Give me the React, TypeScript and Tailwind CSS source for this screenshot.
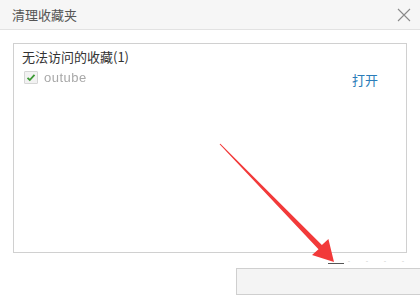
export default function App() {
  return (
    <div className="relative w-[420px] h-[307px] overflow-hidden bg-white font-['Microsoft_YaHei','Noto_Sans_CJK_SC',sans-serif] text-[12px]">
      {/* Title bar */}
      <div className="flex h-[30px] items-center justify-between border-b border-[#e2e2e2] bg-[#f6f6f6] pl-[12px] pr-[9px]">
        <span className="text-[13px] text-[#555]">清理收藏夹</span>
        <CloseIcon />
      </div>

      {/* List panel */}
      <div className="px-[13px] pt-[13px]">
        <div className="h-[210px] border border-[#d0d0d0] bg-white px-[8px] pt-[3px]">
          <div className="text-[13px] leading-[20px] text-[#333]">无法访问的收藏(1)</div>
          <div className="mt-[2px] flex h-[17px] items-center">
            <Checkbox />
            <span className="ml-[6px] font-['Liberation_Sans',sans-serif] text-[13px] tracking-[0.5px] text-[#a8a8a8] blur-[0.4px]">
              outube
            </span>
            <a href="#" className="ml-auto mr-[20px] mt-[5px] text-[13px] text-[#2a7cb8]">
              打开
            </a>
          </div>
        </div>
      </div>

      {/* Footer */}
      <div className="mt-[6px] flex h-[9px] items-center pl-[328px] text-[7px] leading-none text-[#c8c8c8]">
        <span className="h-px w-[16px] bg-[#555]" />
        <span className="ml-[4px] tracking-[7px]">- - - --</span>
      </div>
      <div className="flex justify-end">
        <button className="-mr-[8px] h-[27px] w-[192px] border border-[#cfcfcf] bg-[#f4f4f4]" />
      </div>

      {/* Red arrow overlay */}
      <svg className="pointer-events-none absolute left-0 top-0" width="420" height="307">
        <polygon
          points="220.4,143.7 321.9,245.1 328.4,239.0 334,262 312.0,255.0 318.5,249.3 219.6,144.3"
          fill="#f23a3a"
        />
      </svg>
    </div>
  );
}

function Checkbox() {
  return (
    <span className="ml-[2px] flex h-[13px] w-[14px] items-center justify-center rounded-[1px] border border-[#d6d6d6] bg-[#f2f2f2]">
      <svg width="10" height="9" viewBox="0 0 10 9">
        <path d="M1.5 4.8 L3.8 7 L8.5 1.8" fill="none" stroke="#3d9a35" strokeWidth="1.8" />
      </svg>
    </span>
  );
}

function CloseIcon() {
  return (
    <svg width="14" height="14" viewBox="0 0 14 14">
      <path d="M1 1 L13 13 M13 1 L1 13" stroke="#8a8a8a" strokeWidth="1.1" />
    </svg>
  );
}
